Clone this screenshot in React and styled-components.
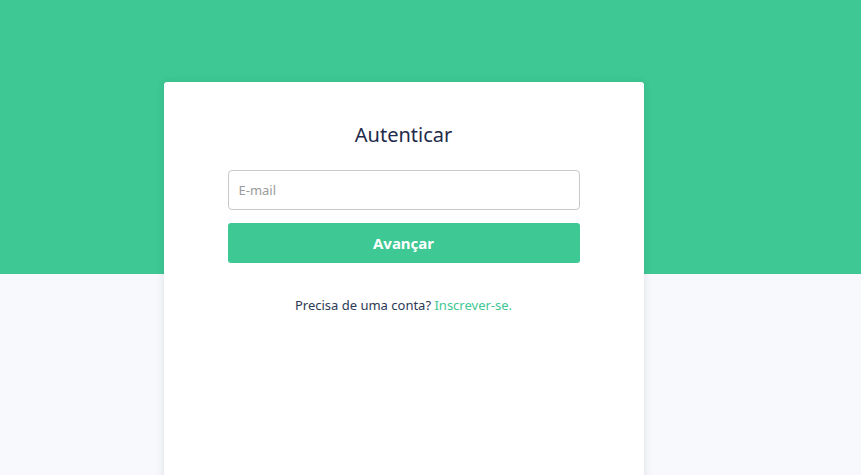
import React from "react";
import styled, { createGlobalStyle } from "styled-components";

const GlobalStyle = createGlobalStyle`
  html, body {
    margin: 0;
    padding: 0;
    background: #f8f9fc;
    font-family: "Noto Sans", "Open Sans", sans-serif;
  }
`;

const Page = styled.div`
  height: 475px;
  overflow: hidden;
`;

const Banner = styled.div`
  height: 274px;
  background-color: #3dc894;
`;

const Wrapper = styled.div`
  display: flex;
  justify-content: center;
  margin-top: -192px;
  padding-right: 54px;
`;

const Card = styled.div`
  width: 480px;
  height: 420px;
  background: #fff;
  border-radius: 3px;
  box-shadow: 0 1px 8px rgba(30, 40, 70, 0.12);
  padding: 38px 64px 40px;
  box-sizing: border-box;
  display: flex;
  flex-direction: column;
`;

const Title = styled.h1`
  margin: 0 0 20px;
  font-size: 20px;
  font-weight: 400;
  color: #1e2b4a;
  text-align: center;
  line-height: 30px;
`;

const Input = styled.input`
  height: 40px;
  box-sizing: border-box;
  border: 1px solid #c9c9c9;
  border-radius: 4px;
  padding: 0 10px;
  font-family: inherit;
  font-size: 13px;
  color: #333;
  outline: none;

  &::placeholder {
    color: #9a9a9a;
  }
`;

const Button = styled.button`
  margin-top: 13px;
  height: 40px;
  border: none;
  border-radius: 3px;
  background: #3dc894;
  color: #fff;
  font-family: inherit;
  font-size: 15px;
  font-weight: 700;
  cursor: pointer;
`;

const Footer = styled.p`
  margin: 33px 0 0;
  text-align: center;
  font-size: 13px;
  color: #2c3a55;
`;

const Link = styled.a`
  color: #3dc894;
  text-decoration: none;
`;

export default function App() {
  return (
    <Page>
      <GlobalStyle />
      <Banner />
      <Wrapper>
        <Card>
          <Title>Autenticar</Title>
          <Input type="email" placeholder="E-mail" />
          <Button>Avançar</Button>
          <Footer>
            Precisa de uma conta? <Link href="#">Inscrever-se.</Link>
          </Footer>
        </Card>
      </Wrapper>
    </Page>
  );
}
